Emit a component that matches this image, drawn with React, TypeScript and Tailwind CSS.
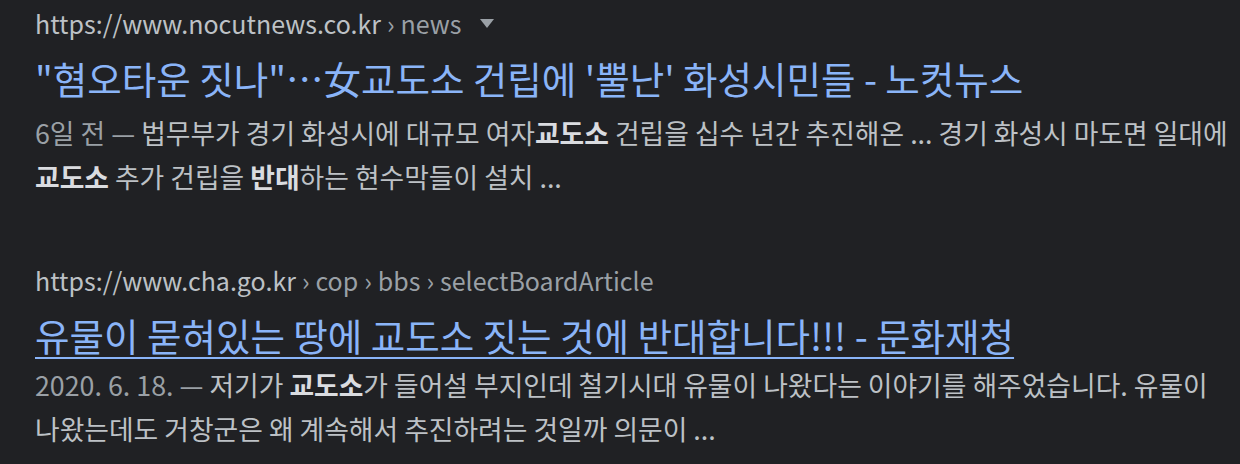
const FONT = "font-['Noto_Sans_CJK_KR','Noto_Sans',sans-serif]";

function Crumb({ domain, path }: { domain: string; path: string[] }) {
  return (
    <div className="flex items-center h-[44px] leading-[44px] text-[25px] whitespace-nowrap">
      <span className="text-[#bdc1c6]">{domain}</span>
      {path.map((p) => (
        <span key={p} className="text-[#9aa0a6]">
          <span className="mx-[6px]">›</span>
          {p}
        </span>
      ))}
    </div>
  );
}

export default function App() {
  return (
    <div
      className={`${FONT} bg-[#202124] w-[1240px] h-[464px] overflow-hidden pl-[35px] pt-[1px]`}
    >
      {/* result 1 */}
      <div>
        <div className="flex items-center">
          <Crumb domain="https://www.nocutnews.co.kr" path={["news"]} />
          <svg width="14" height="9" viewBox="0 0 14 9" className="ml-[18px]">
            <path d="M0 0 H14 L7 9 Z" fill="#9aa0a6" />
          </svg>
        </div>
        <a
          href="#"
          className="block mt-[5px] h-[56px] leading-[56px] text-[37.5px] text-[#8ab4f8] whitespace-nowrap"
        >
          "혐오타운 짓나"…女교도소 건립에 '뿔난' 화성시민들 - 노컷뉴스
        </a>
        <div className="mt-[5px] text-[26.8px] leading-[44px] text-[#bdc1c6] whitespace-nowrap">
          <span className="text-[#9aa0a6]">6일 전 — </span>
          법무부가 경기 화성시에 대규모 여자
          <b className="font-bold text-[#dadce0]">교도소</b> 건립을 십수 년간
          추진해온 ... 경기 화성시 마도면 일대에
          <br />
          <b className="font-bold text-[#dadce0]">교도소</b> 추가 건립을{" "}
          <b className="font-bold text-[#dadce0]">반대</b>하는 현수막들이 설치
          ...
        </div>
      </div>

      {/* result 2 */}
      <div className="mt-[59px]">
        <Crumb
          domain="https://www.cha.go.kr"
          path={["cop", "bbs", "selectBoardArticle"]}
        />
        <a
          href="#"
          className="block mt-[5px] h-[56px] leading-[56px] text-[37.5px] text-[#8ab4f8] whitespace-nowrap underline decoration-2 underline-offset-[6px]"
        >
          유물이 묻혀있는 땅에 교도소 짓는 것에 반대합니다!!! - 문화재청
        </a>
        <div className="text-[26.8px] leading-[44px] text-[#bdc1c6] whitespace-nowrap">
          <span className="text-[#9aa0a6]">2020. 6. 18. — </span>
          저기가 <b className="font-bold text-[#dadce0]">교도소</b>가 들어설
          부지인데 철기시대 유물이 나왔다는 이야기를 해주었습니다. 유물이
          <br />
          나왔는데도 거창군은 왜 계속해서 추진하려는 것일까 의문이 ...
        </div>
      </div>
    </div>
  );
}
